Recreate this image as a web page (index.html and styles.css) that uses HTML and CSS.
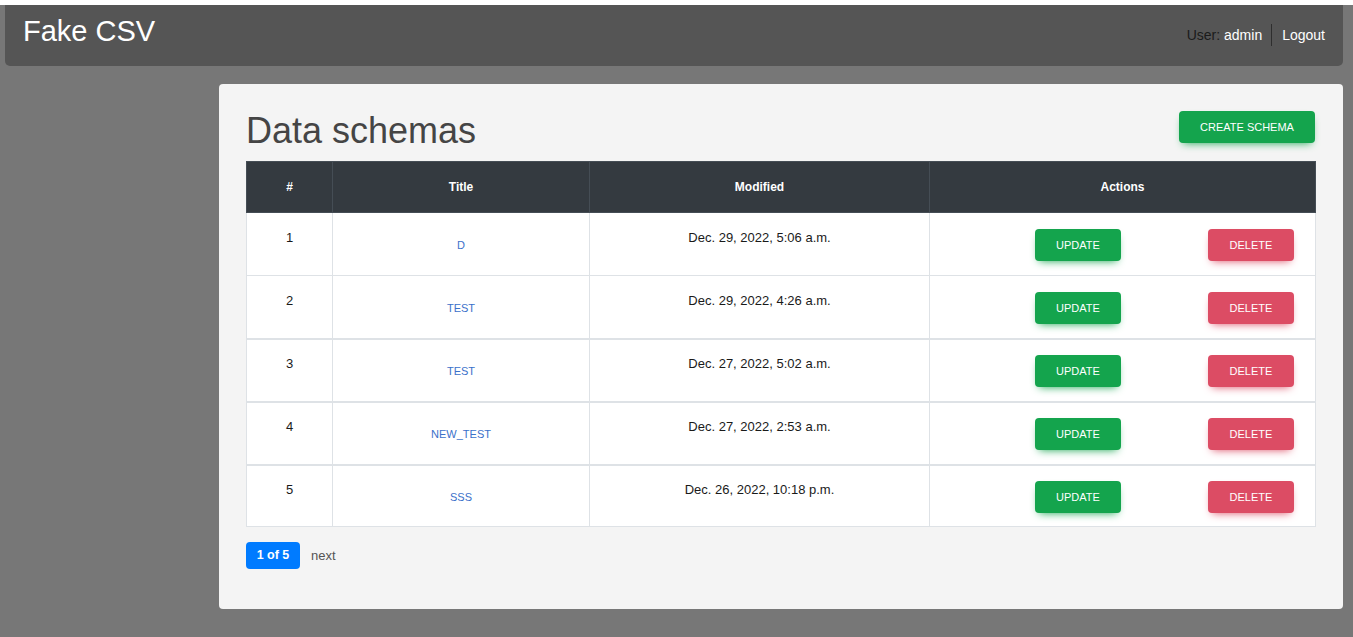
FILE: index.html
```html
<!DOCTYPE html>
<html lang="en">
<head>
<meta charset="utf-8">
<title>Fake CSV</title>
<link rel="stylesheet" href="styles.css">
</head>
<body>
<div class="topstrip"></div>
<div class="page">
  <header class="navbar">
    <a class="brand" href="#">Fake CSV</a>
    <div class="user">
      <span class="user-label">User: <span class="uname">admin</span></span>
      <span class="sep"></span>
      <a class="logout" href="#">Logout</a>
    </div>
  </header>
  <main class="layout">
    <section class="card">
      <div class="card-head">
        <h1>Data schemas</h1>
        <a class="btn btn-success btn-create" href="#">Create schema</a>
      </div>
      <table class="schemas">
        <colgroup>
          <col class="c-num"><col class="c-title"><col class="c-mod"><col class="c-act">
        </colgroup>
        <thead>
          <tr><th>#</th><th>Title</th><th>Modified</th><th>Actions</th></tr>
        </thead>
        <tbody>
          <tr>
            <td>1</td>
            <td><a class="btn-link" href="#">D</a></td>
            <td>Dec. 29, 2022, 5:06 a.m.</td>
            <td><div class="actions"><a class="btn btn-success" href="#">Update</a><a class="btn btn-danger" href="#">Delete</a></div></td>
          </tr>
          <tr>
            <td>2</td>
            <td><a class="btn-link" href="#">test</a></td>
            <td>Dec. 29, 2022, 4:26 a.m.</td>
            <td><div class="actions"><a class="btn btn-success" href="#">Update</a><a class="btn btn-danger" href="#">Delete</a></div></td>
          </tr>
          <tr class="thick">
            <td>3</td>
            <td><a class="btn-link" href="#">test</a></td>
            <td>Dec. 27, 2022, 5:02 a.m.</td>
            <td><div class="actions"><a class="btn btn-success" href="#">Update</a><a class="btn btn-danger" href="#">Delete</a></div></td>
          </tr>
          <tr class="thick">
            <td>4</td>
            <td><a class="btn-link" href="#">new_test</a></td>
            <td>Dec. 27, 2022, 2:53 a.m.</td>
            <td><div class="actions"><a class="btn btn-success" href="#">Update</a><a class="btn btn-danger" href="#">Delete</a></div></td>
          </tr>
          <tr class="thick last">
            <td>5</td>
            <td><a class="btn-link" href="#">sss</a></td>
            <td>Dec. 26, 2022, 10:18 p.m.</td>
            <td><div class="actions"><a class="btn btn-success" href="#">Update</a><a class="btn btn-danger" href="#">Delete</a></div></td>
          </tr>
        </tbody>
      </table>
      <nav class="pager">
        <span class="current">1 of 5</span>
        <a class="next" href="#">next</a>
      </nav>
    </section>
  </main>
</div>
</body>
</html>
```
FILE: styles.css
```css
* { box-sizing: border-box; }

html, body {
  margin: 0;
  padding: 0;
}

body {
  background: #777777;
  font-family: "Liberation Sans", Arial, sans-serif;
  color: #212529;
  height: 637px;
  overflow: hidden;
}

.topstrip {
  height: 5px;
  background: #ffffff;
}

.page {
  padding: 0 10px 0 5px;
}

.navbar {
  height: 61px;
  background: #555555;
  border-radius: 0 0 5px 5px;
  display: flex;
  align-items: center;
  justify-content: space-between;
  padding: 0 18px 0 18px;
}

.brand {
  color: #ffffff;
  text-decoration: none;
  font-size: 29px;
  margin-bottom: 8px;
}

.user {
  display: flex;
  align-items: center;
  font-size: 14px;
  margin-bottom: 1px;
}

.user-label { color: #1b1b1b; }
.uname { color: #ffffff; }

.sep {
  width: 1px;
  height: 22px;
  background: #2e2e2e;
  margin: 0 10px 0 9px;
}

.logout {
  color: #ffffff;
  text-decoration: none;
}

.layout {
  padding: 18px 0 0 214px;
}

.card {
  background: #f4f4f4;
  border-radius: 4px;
  padding: 25px 28px 40px 27px;
}

.card-head {
  display: flex;
  justify-content: space-between;
  align-items: flex-start;
  margin-bottom: 9px;
}

.card-head h1 {
  margin: 0;
  font-size: 36px;
  font-weight: normal;
  line-height: 43px;
  color: #454545;
}

.btn {
  display: inline-block;
  height: 32px;
  line-height: 32px;
  border-radius: 4px;
  color: #ffffff;
  text-decoration: none;
  text-transform: uppercase;
  font-size: 11px;
  text-align: center;
}

.btn-success {
  background: #14a44d;
  box-shadow: 0 4px 9px -4px #14a44d;
}

.btn-danger {
  background: #dc4c64;
  box-shadow: 0 4px 9px -4px #dc4c64;
}

.btn-create {
  width: 136px;
  margin-top: 2px;
}

.schemas {
  width: 100%;
  border-collapse: collapse;
  table-layout: fixed;
}

.c-num { width: 86px; }
.c-title { width: 257px; }
.c-mod { width: 340px; }
.c-act { width: 386px; }

.schemas th {
  background: #343a40;
  color: #ffffff;
  font-size: 12px;
  font-weight: bold;
  height: 51px;
  border: 1px solid #454d55;
  text-align: center;
  vertical-align: middle;
}

.schemas td {
  background: #ffffff;
  border: 1px solid #dee2e6;
  text-align: center;
  vertical-align: top;
  font-size: 13px;
  line-height: 18px;
  padding: 16px 8px 14px;
  color: #1a1a1a;
}

.schemas tr.thick td {
  border-top-width: 2px;
  padding-top: 15px;
}

.schemas tr.last td {
  padding-bottom: 13px;
}

.btn-link {
  display: inline-block;
  height: 32px;
  line-height: 32px;
  color: #3b71ca;
  text-decoration: none;
  text-transform: uppercase;
  font-size: 11px;
}

.actions {
  display: flex;
  justify-content: flex-end;
  gap: 87px;
  padding-right: 13px;
}

.actions .btn {
  width: 86px;
}

.pager {
  display: flex;
  align-items: center;
  margin-top: 15px;
}

.current {
  display: inline-block;
  background: #007bff;
  color: #ffffff;
  font-weight: bold;
  font-size: 12.5px;
  height: 27px;
  line-height: 27px;
  border-radius: 4px;
  width: 54px;
  text-align: center;
}

.next {
  margin-left: 11px;
  color: #555555;
  text-decoration: none;
  font-size: 13px;
}
```
